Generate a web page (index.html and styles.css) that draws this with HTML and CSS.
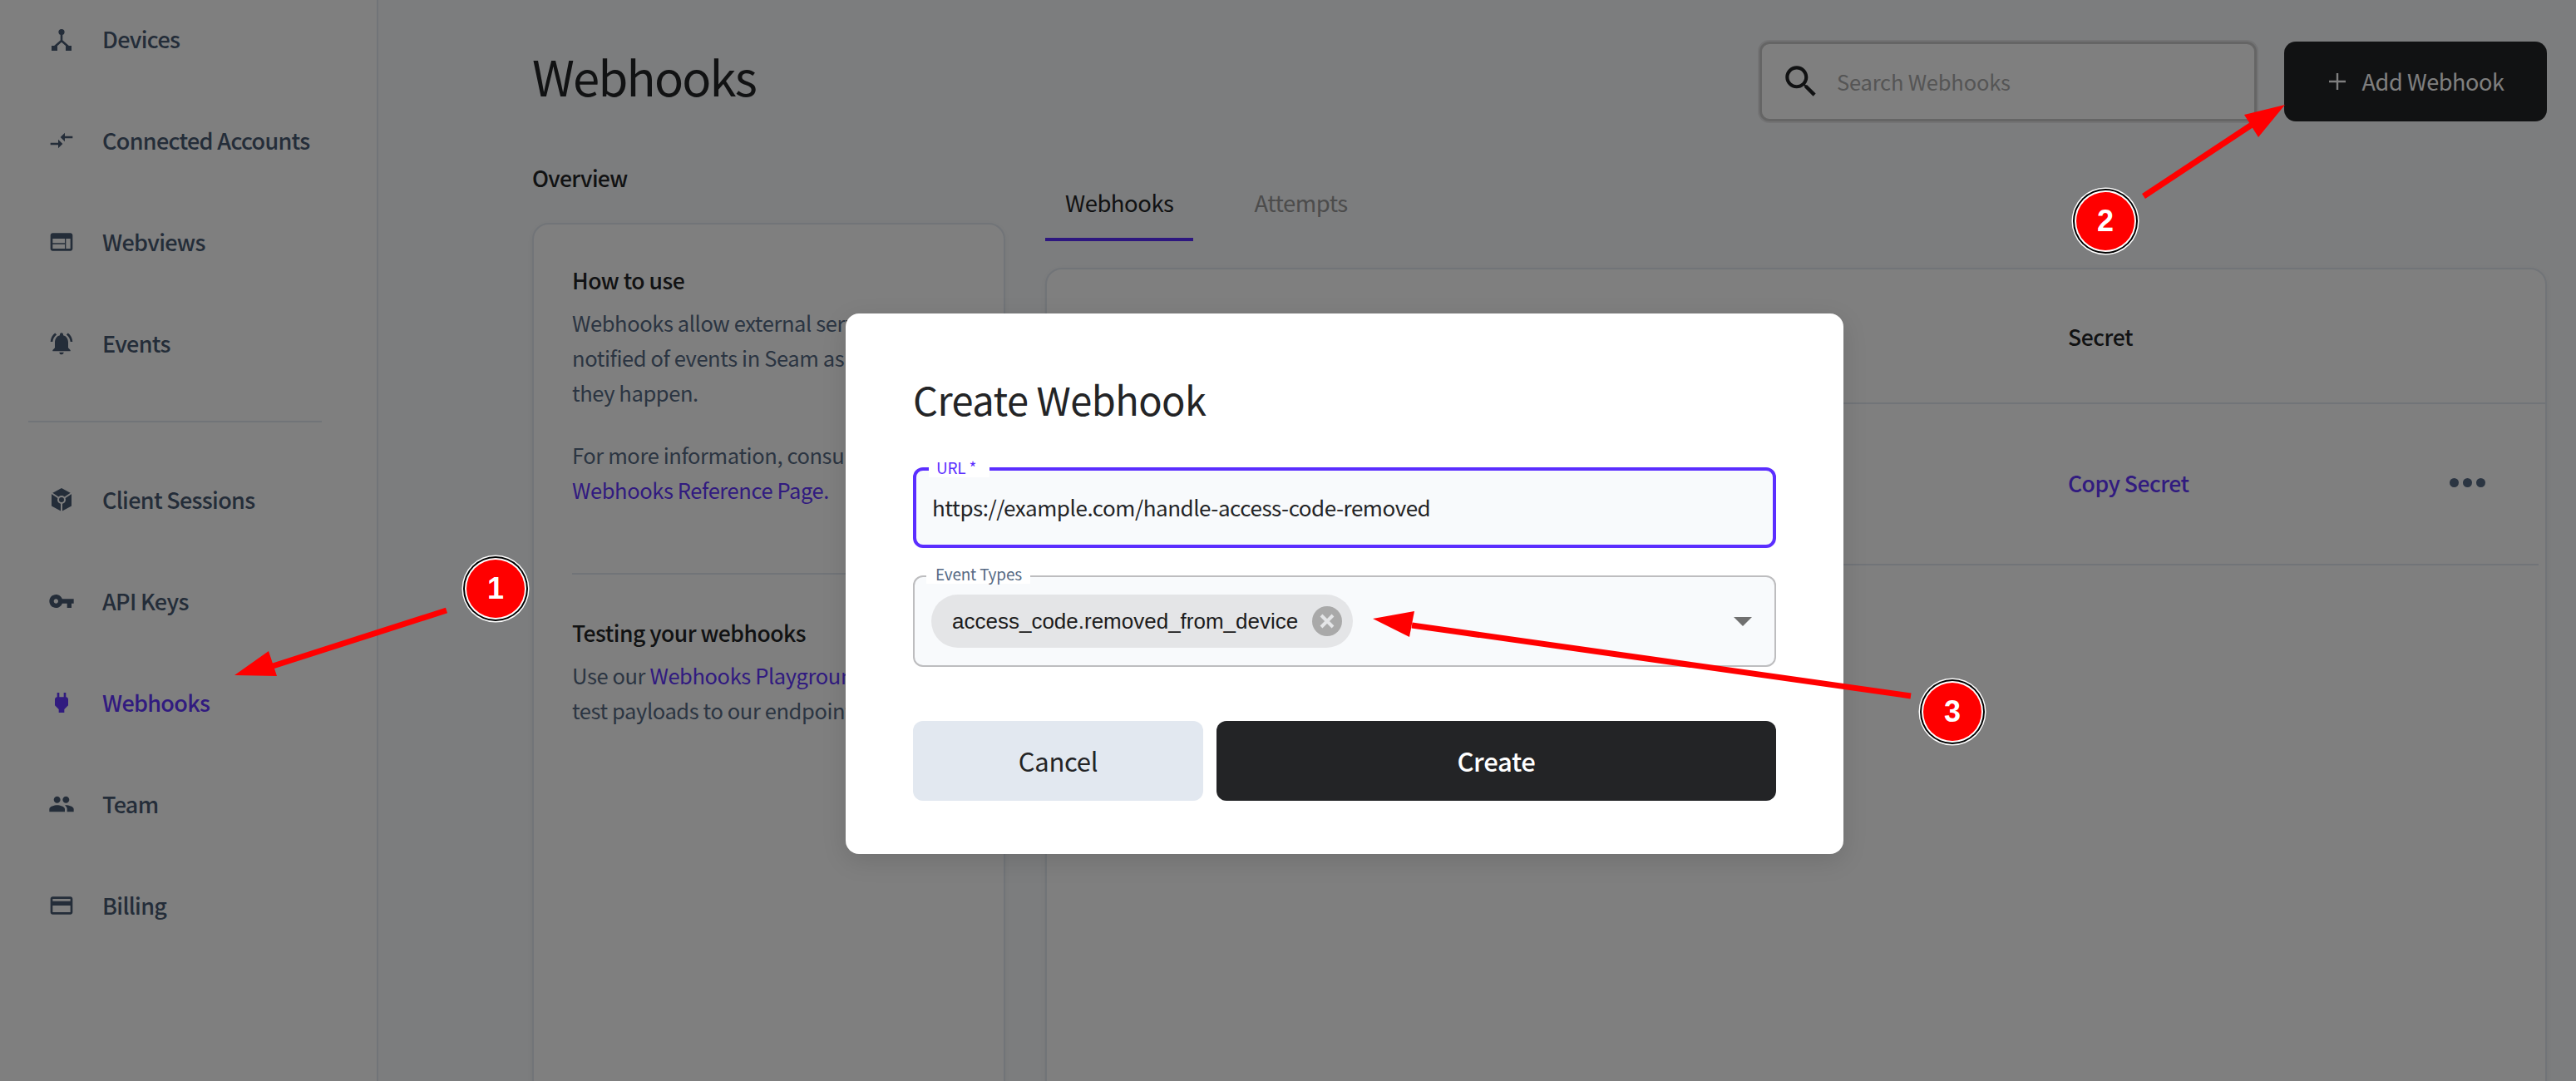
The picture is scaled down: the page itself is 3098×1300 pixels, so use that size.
FILE: index.html

```html
<!DOCTYPE html>
<html lang="en">
<head>
  <meta charset="UTF-8" />
  <title>Webhooks</title>
  <link rel="stylesheet" href="styles.css">
</head>
<body>
  <div class="app">
    <!-- Sidebar -->
    <aside class="sidebar">
      <nav class="nav">
        <a class="nav-item">
          <svg class="nav-icon" viewBox="0 0 32 32"><circle cx="16" cy="7.5" r="3.6"/><path class="hub-line" d="M16 9v9M16 18l-8 7M16 18l8 7"/><rect x="4" y="24" width="7" height="6"/><rect x="21" y="24" width="7" height="6"/></svg>
          <span>Devices</span>
        </a>
        <a class="nav-item">
          <svg class="nav-icon" viewBox="0 0 24 24"><path d="M9.01 14H2v2h7.01v3L13 15l-3.99-4v3zm5.98-1v-3H22V8h-7.01V5L11 9l3.99 4z"/></svg>
          <span>Connected Accounts</span>
        </a>
        <a class="nav-item">
          <svg class="nav-icon" viewBox="0 0 24 24"><path d="M20 4H4c-1.1 0-1.99.9-1.99 2L2 18c0 1.1.9 2 2 2h16c1.1 0 2-.9 2-2V6c0-1.1-.9-2-2-2zm-5 14H4v-4h11v4zm0-5H4V9h11v4zm5 5h-4V9h4v9z"/></svg>
          <span>Webviews</span>
        </a>
        <a class="nav-item">
          <svg class="nav-icon" viewBox="0 0 24 24"><path d="M7.58 4.08 6.15 2.65C3.75 4.48 2.17 7.3 2.03 10.5h2c.15-2.65 1.51-4.97 3.55-6.42zm12.39 6.42h2c-.15-3.2-1.73-6.02-4.12-7.85l-1.42 1.43c2.02 1.45 3.39 3.77 3.54 6.42zM18 11c0-3.07-1.64-5.64-4.5-6.32V4c0-.83-.67-1.5-1.5-1.5s-1.5.67-1.5 1.5v.68C7.63 5.36 6 7.92 6 11v5l-2 2v1h16v-1l-2-2v-5zm-6 11c.14 0 .27-.01.4-.04.65-.14 1.18-.58 1.44-1.18.1-.24.15-.5.15-.78h-4c.01 1.1.9 2 2.01 2z"/></svg>
          <span>Events</span>
        </a>
        <hr class="nav-divider">
        <a class="nav-item">
          <svg class="nav-icon" viewBox="0 0 32 32"><path d="M16 2l12 6.5v15L16 30 4 23.5v-15z"/><path class="cube-cut" d="M4 8l9 6M28 8l-9 6M16 20v10"/><circle class="cube-cut" cx="16" cy="16" r="4"/></svg>
          <span>Client Sessions</span>
        </a>
        <a class="nav-item">
          <svg class="nav-icon" viewBox="0 0 24 24"><path d="M12.65 10C11.83 7.67 9.61 6 7 6c-3.31 0-6 2.69-6 6s2.69 6 6 6c2.61 0 4.83-1.67 5.65-4H17v4h4v-4h2v-4H12.65zM7 14c-1.1 0-2-.9-2-2s.9-2 2-2 2 .9 2 2-.9 2-2 2z"/></svg>
          <span>API Keys</span>
        </a>
        <a class="nav-item active">
          <svg class="nav-icon" viewBox="0 0 24 24"><path d="M16.01 7 16 3h-2v4h-4V3H8v4h-.01C7 6.99 6 7.99 6 8.99v5.49L9.5 18v3h5v-3l3.5-3.51v-5.5c0-1-1-2-1.99-1.99z"/></svg>
          <span>Webhooks</span>
        </a>
        <a class="nav-item">
          <svg class="nav-icon" viewBox="0 0 24 24"><path d="M16 11c1.66 0 2.99-1.34 2.99-3S17.66 5 16 5c-1.66 0-3 1.34-3 3s1.34 3 3 3zm-8 0c1.66 0 2.99-1.34 2.99-3S9.66 5 8 5C6.34 5 5 6.34 5 8s1.34 3 3 3zm0 2c-2.33 0-7 1.17-7 3.5V19h14v-2.5c0-2.33-4.67-3.5-7-3.5zm8 0c-.29 0-.62.02-.97.05 1.16.84 1.97 1.97 1.97 3.45V19h6v-2.5c0-2.33-4.67-3.5-7-3.5z"/></svg>
          <span>Team</span>
        </a>
        <a class="nav-item">
          <svg class="nav-icon" viewBox="0 0 24 24"><path d="M20 4H4c-1.11 0-1.99.89-1.99 2L2 18c0 1.11.89 2 2 2h16c1.11 0 2-.89 2-2V6c0-1.11-.89-2-2-2zm0 14H4v-6h16v6zm0-10H4V6h16v2z"/></svg>
          <span>Billing</span>
        </a>
      </nav>
    </aside>

    <!-- Main content -->
    <main class="main">
      <header class="page-header">
        <h1>Webhooks</h1>
        <div class="search">
          <svg class="search-icon" viewBox="0 0 24 24"><path d="M15.5 14h-.79l-.28-.27C15.41 12.59 16 11.11 16 9.5 16 5.91 13.09 3 9.5 3S3 5.91 3 9.5 5.91 16 9.5 16c1.61 0 3.09-.59 4.23-1.57l.27.28v.79l5 4.99L20.49 19l-4.99-5zm-6 0C7.01 14 5 11.99 5 9.5S7.01 5 9.5 5 14 7.01 14 9.5 11.99 14 9.5 14z"/></svg>
          <span>Search Webhooks</span>
        </div>
        <button class="add-btn">
          <svg class="plus-icon" viewBox="0 0 20 20"><path d="M10 0v20M0 10h20"/></svg>
          <span>Add Webhook</span>
        </button>
      </header>

      <div class="columns">
        <section class="overview">
          <h2>Overview</h2>
          <div class="card info-card">
            <h3>How to use</h3>
            <p>Webhooks allow external services to be<br>notified of events in Seam as<br>they happen.</p>
            <p class="spaced">For more information, consult the<br><a>Webhooks Reference Page.</a></p>
            <hr class="info-divider">
            <h3>Testing your webhooks</h3>
            <p>Use our <a>Webhooks Playground</a> to send<br>test payloads to our endpoint.</p>
          </div>
        </section>

        <section class="listing">
          <div class="tabs">
            <div class="tab selected">Webhooks</div>
            <div class="tab">Attempts</div>
          </div>
          <div class="card table-card">
            <div class="table-head"><span>Secret</span></div>
            <div class="table-row">
              <a>Copy Secret</a>
              <span class="dots"><i></i><i></i><i></i></span>
            </div>
          </div>
        </section>
      </div>
    </main>
  </div>

  <!-- Dialog -->
  <div class="overlay">
    <div class="modal">
      <h2>Create Webhook</h2>
      <div class="field focused">
        <label>URL *</label>
        <span>https://example.com/handle-access-code-removed</span>
      </div>
      <div class="field select">
        <label>Event Types</label>
        <div class="chip">
          <span>access_code.removed_from_device</span>
          <svg class="chip-close" viewBox="0 0 36 36"><circle cx="18" cy="18" r="18"/><path d="M11 11l14 14M25 11L11 25"/></svg>
        </div>
        <div class="caret"></div>
      </div>
      <div class="modal-actions">
        <button class="btn-cancel">Cancel</button>
        <button class="btn-create">Create</button>
      </div>
    </div>
  </div>

  <!-- Annotations -->
  <svg class="arrows" viewBox="0 0 3098 1300">
    <path d="M537 734L325 802"/>
    <polygon points="282,812 323,783 333,813"/>
    <path d="M2578 236L2708 150"/>
    <polygon points="2748,126 2699,138 2716,165"/>
    <path d="M2298 837L1698 752"/>
    <polygon points="1651,744 1701,735 1695,766"/>
  </svg>
  <div class="badge badge-one">1</div>
  <div class="badge badge-two">2</div>
  <div class="badge badge-three">3</div>
</body>
</html>
```

FILE: styles.css

```css
* {
  box-sizing: border-box;
}

html, body {
  margin: 0;
  height: 1300px;
  overflow: hidden;
}

body {
  position: relative;
  font-family: "Noto Sans CJK SC", "Noto Sans", sans-serif;
  background-color: #f8fafc;
  color: #232426;
}

h1, h2, h3, p {
  margin: 0;
  font-weight: 400;
}

a {
  color: #6236ff;
}

.app {
  display: flex;
  height: 1300px;
}

/* Sidebar */
.sidebar {
  width: 455px;
  flex: none;
  background-color: #fff;
  border-right: 2px solid #e2e8f0;
}

.nav {
  margin-top: -14px;
}

.nav-item {
  display: flex;
  align-items: center;
  height: 122px;
  padding-left: 58px;
  font-size: 27px;
  font-weight: 500;
  letter-spacing: -0.7px;
  color: #485a72;
}

.nav-item span {
  margin-bottom: 2px;
}

.nav-item.active {
  color: #6236ff;
}

.nav-icon {
  width: 32px;
  height: 32px;
  margin-right: 33px;
  fill: currentColor;
}

.hub-line {
  fill: none;
  stroke: currentColor;
  stroke-width: 2.6;
}

.cube-cut {
  fill: #485a72;
  stroke: #fff;
  stroke-width: 2;
}

.nav-divider {
  margin: 32px 66px 32px 34px;
  height: 2px;
  border: none;
  background-color: #e2e8f0;
}

/* Main */
.main {
  flex: 1;
  padding: 50px 35px 0 185px;
}

.page-header {
  display: flex;
  align-items: center;
  height: 96px;
}

.page-header h1 {
  flex: 1;
  margin-bottom: 14px;
  font-size: 58px;
  line-height: 84px;
  letter-spacing: -1.8px;
}

.search {
  display: flex;
  align-items: center;
  width: 598px;
  height: 96px;
  padding-left: 22px;
  border: 3px solid #cbcbcb;
  border-radius: 12px;
  background-color: #fff;
  box-shadow: 0 0 0 2px #e6e7e9;
  font-size: 25.5px;
  letter-spacing: -0.2px;
  color: #aaa;
}

.search span {
  margin-bottom: 2px;
}

.search-icon {
  width: 50px;
  height: 50px;
  margin-right: 18px;
  fill: #232426;
}

.add-btn {
  display: flex;
  align-items: center;
  justify-content: center;
  width: 316px;
  height: 96px;
  margin-left: 33px;
  padding-left: 8px;
  border: none;
  border-radius: 14px;
  background-color: #232426;
  color: #fff;
  font-family: inherit;
  font-size: 27px;
  letter-spacing: -0.4px;
}

.add-btn span {
  margin-bottom: 2px;
}

.plus-icon {
  width: 20px;
  height: 20px;
  margin-right: 20px;
  stroke: #fff;
  stroke-width: 2.4;
  fill: none;
}

.columns {
  display: grid;
  grid-template-columns: 569px 1806px;
  gap: 48px;
}

.card {
  height: 1100px;
  background-color: #fff;
  border: 2px solid #e2e8f0;
  border-radius: 20px;
  box-shadow: 0 2px 6px rgba(0, 0, 0, 0.05);
}

/* Overview card */
.overview h2 {
  margin-top: 46px;
  margin-bottom: 32px;
  font-size: 26.5px;
  font-weight: 500;
  line-height: 44px;
  letter-spacing: -0.65px;
}

.info-card {
  padding: 46px 46px 0;
}

.info-card h3 {
  font-size: 26.5px;
  font-weight: 500;
  line-height: 42px;
  letter-spacing: -0.5px;
}

.info-card p {
  margin-top: 9px;
  font-size: 25.5px;
  line-height: 42px;
  letter-spacing: -0.4px;
  color: #566a84;
  white-space: nowrap;
}

.info-card p.spaced {
  margin-top: 33px;
}

.info-divider {
  margin: 79px 0 49px;
  height: 2px;
  border: none;
  background-color: #e2e8f0;
}

/* Webhook table */
.tabs {
  display: flex;
  height: 144px;
  padding-top: 50px;
}

.tab {
  height: 94px;
  padding: 25px 24px 0;
  font-size: 27.5px;
  line-height: 44px;
  letter-spacing: -0.5px;
  color: #989898;
  margin-right: 24px;
}

.tab.selected {
  margin-right: 49px;
  color: #232426;
  border-bottom: 4px solid #5b2eff;
}

.table-card {
  margin-top: 32px;
}

.table-head {
  display: flex;
  align-items: center;
  height: 162px;
  padding-left: 1228px;
  border-bottom: 2px solid #e2e8f0;
  font-size: 26.5px;
  font-weight: 500;
  letter-spacing: -0.4px;
}

.table-row {
  display: flex;
  align-items: center;
  justify-content: space-between;
  height: 194px;
  margin-right: 8px;
  padding: 0 64px 4px 1228px;
  border-bottom: 2px solid #e2e8f0;
  font-size: 26.5px;
  font-weight: 500;
  letter-spacing: -0.5px;
}

.dots {
  display: flex;
  gap: 5px;
}

.dots i {
  width: 11px;
  height: 11px;
  border-radius: 50%;
  background-color: #566a84;
}

/* Dialog */
.overlay {
  position: absolute;
  inset: 0;
  padding: 377px 0 0 1017px;
  background-color: rgba(0, 0, 0, 0.5);
}

.modal {
  width: 1200px;
  padding: 63px 81px 64px;
  background-color: #fff;
  border-radius: 16px;
  box-shadow: 0 8px 30px rgba(0, 0, 0, 0.12);
}

.modal h2 {
  font-size: 47px;
  line-height: 80px;
  letter-spacing: -0.55px;
  margin-bottom: 42px;
}

.field {
  position: relative;
  display: flex;
  align-items: center;
  background-color: #f8fafc;
}

.field label {
  position: absolute;
  top: -16px;
  left: 14px;
  padding: 0 10px 0 11px;
  background-color: #fff;
  font-size: 19px;
  line-height: 24px;
  letter-spacing: -0.2px;
  color: #566a84;
}

.field.focused {
  height: 97px;
  padding: 0 0 2px 19px;
  border: 4px solid #5b2eff;
  border-radius: 12px;
  font-size: 26px;
  letter-spacing: -0.46px;
}

.field.focused label {
  left: 15px;
  padding: 0 16px 0 9px;
  color: #5b2eff;
}

.field.select {
  height: 110px;
  margin-top: 33px;
  padding: 0 27px 0 20px;
  border: 2px solid #bdbdbf;
  border-radius: 12px;
  justify-content: space-between;
}

.chip {
  display: flex;
  align-items: center;
  height: 64px;
  padding: 0 13px 0 25px;
  border-radius: 32px;
  background-color: #e4e5e7;
  font-family: "Liberation Sans", Arial, sans-serif;
  font-size: 26px;
  color: #1c1c1c;
}

.chip-close {
  width: 36px;
  height: 36px;
  margin-left: 17px;
  fill: #a9a9a9;
}

.chip-close path {
  stroke: #e4e5e7;
  stroke-width: 4;
}

.caret {
  width: 0;
  height: 0;
  border-left: 11px solid transparent;
  border-right: 11px solid transparent;
  border-top: 11px solid #707070;
}

.modal-actions {
  display: flex;
  gap: 16px;
  margin-top: 65px;
}

.modal-actions button {
  height: 96px;
  padding-bottom: 3px;
  border: none;
  border-radius: 12px;
  font-family: inherit;
  font-size: 31px;
  letter-spacing: -0.3px;
}

.btn-cancel {
  width: 349px;
  background-color: #e2e8f0;
  color: #232426;
}

.btn-create {
  flex: 1;
  background-color: #232426;
  color: #fff;
  font-weight: 500;
}

/* Annotations */
.arrows {
  position: absolute;
  top: 0;
  left: 0;
  width: 3098px;
  height: 1300px;
}

.arrows path {
  fill: none;
  stroke: #ff0000;
  stroke-width: 7;
}

.arrows polygon {
  fill: #ff0000;
}

.badge {
  position: absolute;
  display: flex;
  align-items: center;
  justify-content: center;
  width: 70px;
  height: 70px;
  border-radius: 50%;
  background-color: #ff0000;
  box-shadow: 0 0 0 2px #fff, 0 0 0 4px #000, 0 0 0 5.5px #fff;
  font-family: "Liberation Sans", Arial, sans-serif;
  font-size: 36px;
  font-weight: 700;
  color: #fff;
}

.badge-one {
  left: 561px;
  top: 673px;
}

.badge-two {
  left: 2497px;
  top: 231px;
}

.badge-three {
  left: 2313px;
  top: 821px;
}
```
